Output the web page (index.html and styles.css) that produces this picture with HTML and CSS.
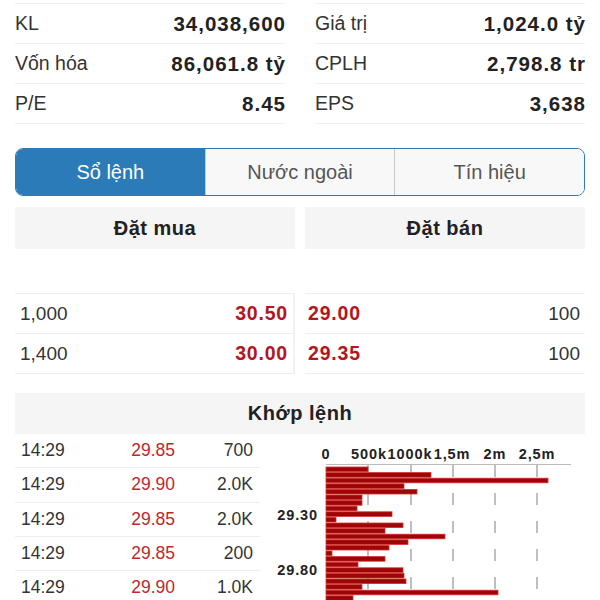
FILE: index.html
```html
<!DOCTYPE html>
<html lang="vi">
<head>
    <meta charset="UTF-8">
    <meta name="viewport" content="width=device-width, initial-scale=1.0">
    <title>Sổ lệnh</title>
    <link rel="stylesheet" href="styles.css">
</head>
<body>

<div class="stats">
    <div class="stat-col">
        <div class="stat-row"><span class="label">KL</span><span class="value">34,038,600</span></div>
        <div class="stat-row"><span class="label">Vốn hóa</span><span class="value">86,061.8 tỷ</span></div>
        <div class="stat-row"><span class="label">P/E</span><span class="value">8.45</span></div>
    </div>
    <div class="stat-col">
        <div class="stat-row"><span class="label">Giá trị</span><span class="value">1,024.0 tỷ</span></div>
        <div class="stat-row"><span class="label">CPLH</span><span class="value">2,798.8 tr</span></div>
        <div class="stat-row"><span class="label">EPS</span><span class="value">3,638</span></div>
    </div>
</div>

<div class="tabs">
    <div class="tab active">Sổ lệnh</div>
    <div class="tab">Nước ngoài</div>
    <div class="tab">Tín hiệu</div>
</div>

<div class="book-head">
    <div class="head-cell">Đặt mua</div>
    <div class="head-cell">Đặt bán</div>
</div>

<div class="book-rows">
    <div class="book-side buy">
        <div class="book-row"><span>1,000</span><span class="price">30.50</span></div>
        <div class="book-row"><span>1,400</span><span class="price">30.00</span></div>
    </div>
    <div class="book-side sell">
        <div class="book-row"><span class="price">29.00</span><span>100</span></div>
        <div class="book-row"><span class="price">29.35</span><span>100</span></div>
    </div>
</div>

<div class="match-head">Khớp lệnh</div>

<div class="match-body">
    <div class="trades">
        <div class="trade"><span>14:29</span><span class="t-price">29.85</span><span class="t-vol">700</span></div>
        <div class="trade"><span>14:29</span><span class="t-price">29.90</span><span class="t-vol">2.0K</span></div>
        <div class="trade"><span>14:29</span><span class="t-price">29.85</span><span class="t-vol">2.0K</span></div>
        <div class="trade"><span>14:29</span><span class="t-price">29.85</span><span class="t-vol">200</span></div>
        <div class="trade"><span>14:29</span><span class="t-price">29.90</span><span class="t-vol">1.0K</span></div>
    </div>
    <svg class="chart" width="325" height="166" viewBox="0 0 325 166">
        <g class="grid">
            <line x1="108" y1="31" x2="108" y2="166"/>
            <line x1="151" y1="31" x2="151" y2="166"/>
            <line x1="193" y1="31" x2="193" y2="166"/>
            <line x1="235" y1="31" x2="235" y2="166"/>
            <line x1="277" y1="31" x2="277" y2="166"/>
        </g>
        <line class="axis" x1="66" y1="30.5" x2="311" y2="30.5"/>
        <g class="ticks">
            <text x="66" y="25">0</text>
            <text x="109" y="25">500k</text>
            <text x="150" y="25">1000k</text>
            <text x="192" y="25">1,5m</text>
            <text x="235" y="25">2m</text>
            <text x="277" y="25">2,5m</text>
        </g>
        <g class="ylabels">
            <text x="58" y="86">29.30</text>
            <text x="58" y="141">29.80</text>
        </g>
        <g class="bars">
            <rect x="66" y="33" width="42" height="4.6"/>
            <rect x="66" y="38.6" width="105" height="4.6"/>
            <rect x="66" y="44.2" width="222" height="4.6"/>
            <rect x="66" y="49.8" width="78" height="4.6"/>
            <rect x="66" y="55.4" width="91" height="4.6"/>
            <rect x="66" y="61" width="36" height="4.6"/>
            <rect x="66" y="66.6" width="36" height="4.6"/>
            <rect x="66" y="72.2" width="31" height="4.6"/>
            <rect x="66" y="77.8" width="66" height="4.6"/>
            <rect x="66" y="83.4" width="10" height="4.6"/>
            <rect x="66" y="89" width="77" height="4.6"/>
            <rect x="66" y="94.6" width="59" height="4.6"/>
            <rect x="66" y="100.2" width="119" height="4.6"/>
            <rect x="66" y="105.8" width="82" height="4.6"/>
            <rect x="66" y="111.4" width="63" height="4.6"/>
            <rect x="66" y="117" width="6" height="4.6"/>
            <rect x="66" y="122.6" width="59" height="4.6"/>
            <rect x="66" y="128.2" width="32" height="4.6"/>
            <rect x="66" y="133.8" width="77" height="4.6"/>
            <rect x="66" y="139.4" width="78" height="4.6"/>
            <rect x="66" y="145" width="80" height="4.6"/>
            <rect x="66" y="150.6" width="36" height="4.6"/>
            <rect x="66" y="156.2" width="172" height="4.6"/>
            <rect x="66" y="161.8" width="27" height="4.6"/>
        </g>
    </svg>
</div>

</body>
</html>
```

FILE: styles.css
```css
body {
    font-family: "Liberation Sans", Arial, sans-serif;
    background-color: #fff;
    color: #222;
    margin: 0;
}
.stats {
    display: grid;
    grid-template-columns: 1fr 1fr;
    column-gap: 30px;
    padding: 3px 15px 0;
}
.stat-col {
    border-bottom: 1px solid #eee;
}
.stat-row {
    display: flex;
    justify-content: space-between;
    align-items: center;
    height: 40px;
    box-sizing: border-box;
    border-top: 1px solid #eee;
}
.label {
    font-size: 19.5px;
    color: #333;
}
.value {
    font-size: 20.5px;
    font-weight: bold;
    letter-spacing: 1px;
    margin-right: -1px;
}
.tabs {
    display: flex;
    height: 48px;
    box-sizing: border-box;
    margin: 24px 15px 0;
    border: 1px solid #2b7bb9;
    border-radius: 8px;
    overflow: hidden;
}
.tab {
    flex: 1;
    display: flex;
    justify-content: center;
    align-items: center;
    font-size: 20px;
    color: #555;
    background: #f8f8f8;
    border-left: 1px solid #c8c8c8;
}
.tab:first-child {
    border-left: none;
}
.tab.active {
    background: #2b7bb9;
    color: #fff;
}
.book-head {
    display: grid;
    grid-template-columns: 1fr 1fr;
    column-gap: 10px;
    margin: 11px 15px 0;
}
.head-cell, .match-head {
    display: flex;
    justify-content: center;
    align-items: center;
    height: 42px;
    background: #f5f5f5;
    font-size: 20px;
    font-weight: bold;
    letter-spacing: 0.5px;
}
.book-rows {
    display: grid;
    grid-template-columns: 1fr 1fr;
    column-gap: 10px;
    margin: 44px 15px 0;
}
.book-side {
    border-bottom: 1px solid #eee;
}
.book-row {
    display: flex;
    justify-content: space-between;
    align-items: center;
    height: 40px;
    box-sizing: border-box;
    border-top: 1px solid #eee;
    font-size: 19px;
    color: #333;
}
.buy .book-row {
    padding: 0 5px;
    border-right: 2px solid #f2f2f2;
}
.sell .book-row {
    padding: 0 5px 0 3px;
}
.book-row .price {
    color: #b3161d;
    font-weight: bold;
    font-size: 19.5px;
    letter-spacing: 0.8px;
}
.match-head {
    margin: 19px 15px 0;
    height: 41px;
}
.match-body {
    display: flex;
    margin: 0 15px;
}
.trades {
    width: 245px;
    flex-shrink: 0;
}
.trade {
    display: grid;
    grid-template-columns: 1fr 80px 78px;
    align-items: center;
    height: 34.3px;
    box-sizing: border-box;
    padding: 0 7px 0 6px;
    border-bottom: 1px solid #eee;
    font-size: 17.5px;
    color: #333;
}
.t-price, .t-vol {
    text-align: right;
}
.t-price {
    color: #c0272d;
}
.chart {
    display: block;
    flex-shrink: 0;
}
.chart .grid line {
    stroke: #aaa;
    stroke-width: 1.5;
    stroke-dasharray: 12 16;
}
.chart .axis {
    stroke: #bbb;
    stroke-width: 1;
}
.chart text {
    font-family: "Liberation Sans", Arial, sans-serif;
    font-size: 14.5px;
    font-weight: bold;
    letter-spacing: 0.9px;
    fill: #222;
}
.chart .ticks text {
    text-anchor: middle;
}
.chart .ylabels text {
    text-anchor: end;
}
.chart .bars rect {
    fill: #9c0606;
    stroke: #d4302f;
    stroke-width: 0.8;
}
```
